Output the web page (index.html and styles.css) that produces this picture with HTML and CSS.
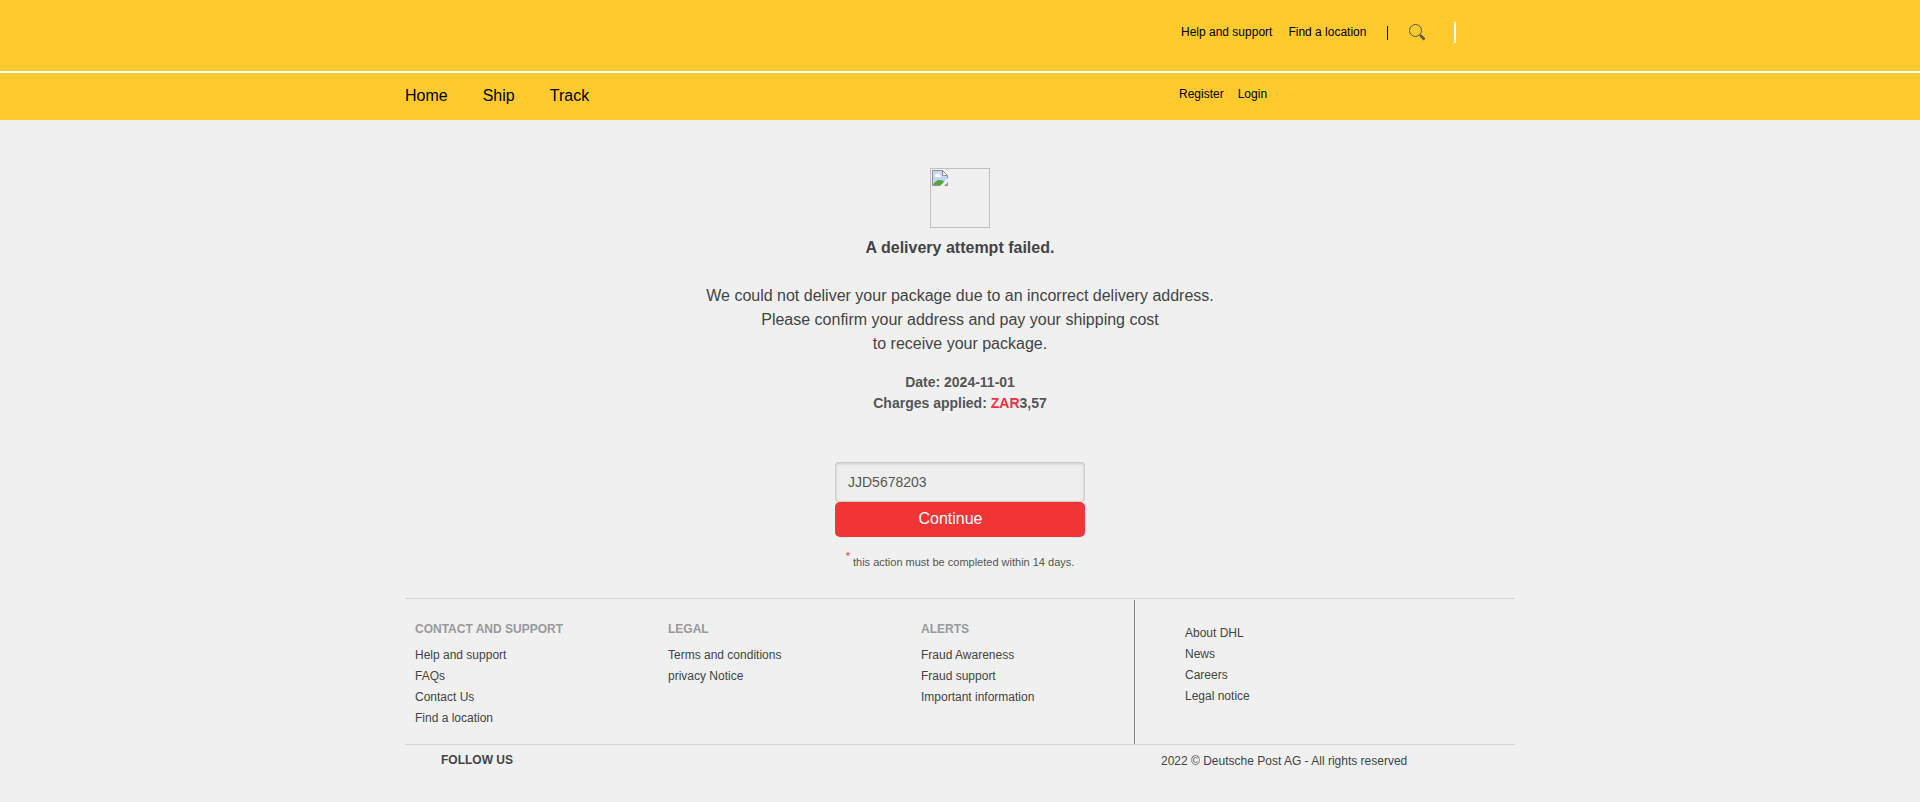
FILE: index.html
```
<!DOCTYPE html>
<html lang="en">
<head>
<meta charset="utf-8">
<meta name="viewport" content="width=device-width, initial-scale=1">
<title>Delivery status</title>
<link rel="stylesheet" href="styles.css">
</head>
<body>
<header>
  <div class="topbar">
    <div class="container split">
      <div></div>
      <nav class="tools" aria-label="Support">
        <a href="#">Help and support</a>
        <a href="#">Find a location</a>
        <span class="rule"></span>
        <button class="search" type="button" aria-label="Search">
          <svg width="17" height="17" viewBox="0 0 17 17" fill="none" stroke="#5b5550"><circle cx="6.500" cy="6.500" r="6"/><path d="M10.500 10.500l2 2" stroke-width="1.500"/><path d="M11.500 11.500l4 4" stroke-width="2.500"/></svg>
        </button>
        <span class="rule-white"></span>
      </nav>
    </div>
  </div>
  <div class="navbar">
    <div class="container split">
      <nav class="main-nav" aria-label="Main">
        <a href="#">Home</a>
        <a href="#">Ship</a>
        <a href="#">Track</a>
      </nav>
      <nav class="account" aria-label="Account">
        <a href="#">Register</a>
        <a href="#">Login</a>
      </nav>
    </div>
  </div>
</header>
<main class="notice">
  <div class="picture">
    <svg width="16" height="16" viewBox="0 0 16 16">
      <path d="M.5.5h10l5 5v10H.5z" fill="#c3d6f8"/>
      <path d="M3 6a1.500 1.500 0 0 1 1.500-2 2 2 0 0 1 3.500 1 1 1 0 0 1 0 2H3z" fill="#fff"/>
      <path d="M1 15c1-3 4-5 7-5 2 0 4 1 5 2l2 3z" fill="#52a93a"/>
      <path d="M8 16l8-8v4l-4 4z" fill="#f0f0f0"/>
      <path d="M8.500 15.500h-8V.5h10l5 5v3M12.500 15.500h3v-3" fill="none" stroke="#909090"/>
      <path d="M10.500.5v5h5z" fill="#fff" stroke="#909090"/>
    </svg>
  </div>
  <h1 class="title">A delivery attempt failed.</h1>
  <p class="message">We could not deliver your package due to an incorrect delivery address.<br>Please confirm your address and pay your shipping cost<br>to receive your package.</p>
  <p class="details">Date: 2024-11-01<br>Charges applied: <span class="currency">ZAR</span>3,57</p>
  <div class="form">
    <input class="field" type="text" value="JJD5678203" aria-label="Shipment number" readonly>
    <button class="continue" type="button">Continue</button>
  </div>
  <p class="note"><sup>*</sup> this action must be completed within 14 days.</p>
</main>
<footer class="container">
  <div class="footer-grid">
    <section class="column">
      <h2>CONTACT AND SUPPORT</h2>
      <ul>
        <li><a href="#">Help and support</a></li>
        <li><a href="#">FAQs</a></li>
        <li><a href="#">Contact Us</a></li>
        <li><a href="#">Find a location</a></li>
      </ul>
    </section>
    <section class="column">
      <h2>LEGAL</h2>
      <ul>
        <li><a href="#">Terms and conditions</a></li>
        <li><a href="#">privacy Notice</a></li>
      </ul>
    </section>
    <section class="column">
      <h2>ALERTS</h2>
      <ul>
        <li><a href="#">Fraud Awareness</a></li>
        <li><a href="#">Fraud support</a></li>
        <li><a href="#">Important information</a></li>
      </ul>
    </section>
    <section class="company">
      <ul>
        <li><a href="#">About DHL</a></li>
        <li><a href="#">News</a></li>
        <li><a href="#">Careers</a></li>
        <li><a href="#">Legal notice</a></li>
      </ul>
    </section>
  </div>
  <div class="bottom">
    <strong class="follow">FOLLOW US</strong>
    <span class="copyright">2022 © Deutsche Post AG - All rights reserved</span>
  </div>
</footer>
</body>
</html>
```

FILE: styles.css
```
* { box-sizing: border-box; }
body {
  margin: 0;
  background: #f0f0f0;
  color: #444;
  font-family: "Liberation Sans", Arial, sans-serif;
  font-size: 12px;
  line-height: 21px;
}
a { color: inherit; text-decoration: none; }
h1, h2, p, ul { margin: 0; padding: 0; }
ul { list-style: none; }
button { font-family: inherit; border: 0; cursor: pointer; }

.container { width: 100%; max-width: 1110px; margin: 0 auto; }
.split { display: grid; grid-template-columns: 776fr 334fr; }

.topbar {
  background: #fecb2f;
  color: #000;
  padding: 21px 0 27px;
  border-bottom: 2px solid #fff;
}
.tools { display: flex; align-items: center; gap: 16px; height: 23px; }
.rule { width: 1px; height: 14px; margin-left: 5px; background: #000; }
.search { display: flex; margin-left: 5px; padding: 0; background: none; }
.rule-white { width: 2px; height: 21px; margin-left: 12px; background: #fff; }

.navbar { background: #fecb2f; color: #000; padding: 11px 0 12px; }
.main-nav { display: flex; gap: 35px; font-size: 16px; line-height: 24px; }
.account { display: flex; gap: 14px; margin-left: -2px; }

.notice {
  display: flex;
  flex-direction: column;
  align-items: center;
  padding: 48px 16px 25px;
  text-align: center;
}
.picture { width: 60px; height: 60px; padding: 1px; border: 1px solid #c0c0c0; line-height: 0; text-align: left; }
.title { margin-top: 8px; font-size: 16px; line-height: 24px; }
.message { margin-top: 24px; font-size: 16px; line-height: 24px; }
.details { margin-top: 16px; color: #555; font-size: 14px; font-weight: bold; }
.currency { color: #ee3344; }
.form { display: flex; flex-direction: column; width: 250px; margin-top: 48px; }
.field {
  width: 100%;
  height: 40px;
  padding: 0 12px;
  border: 1px solid #ccc;
  border-radius: 3px;
  background: #eee;
  box-shadow: inset 0 1px 3px rgba(0, 0, 0, .15);
  color: #555;
  font: 14px "Liberation Sans", Arial, sans-serif;
}
.continue {
  height: 35px;
  padding: 0 19px 2px 0;
  border-radius: 5px;
  background: #f03537;
  color: #fff;
  font-size: 16px;
}
.note { margin-top: 15px; color: #555; font-size: 11px; }
.note sup { color: #ee3344; font-size: 11px; line-height: 0; vertical-align: 6px; }

.footer-grid {
  display: grid;
  grid-template-columns: 253fr 253fr 223fr 381fr;
  border-top: 1px solid #d6d6d6;
  border-bottom: 1px solid #d6d6d6;
}
.column { padding: 20px 0 15px 10px; }
.column h2 { margin-bottom: 5px; color: #999; font-size: 12px; line-height: 21px; }
.company { margin-top: 1px; padding: 23px 0 15px 50px; border-left: 1px solid #888; }
.bottom { display: grid; grid-template-columns: 756fr 354fr; padding: 5px 0 24px; }
.follow { padding-left: 36px; }
.copyright { padding-top: 1px; }
```
